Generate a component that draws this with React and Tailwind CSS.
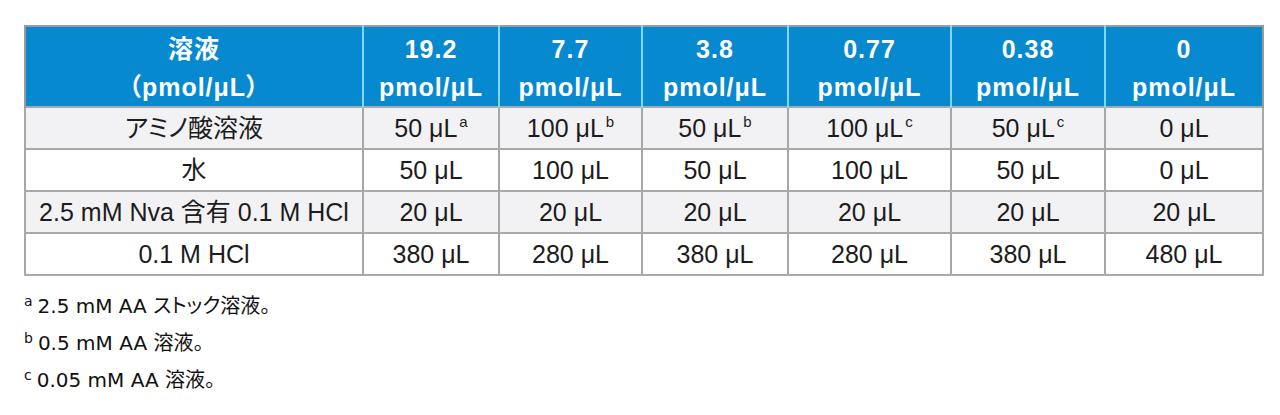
import React from "react";

const heads = [
  ["19.2", "pmol/μL"],
  ["7.7", "pmol/μL"],
  ["3.8", "pmol/μL"],
  ["0.77", "pmol/μL"],
  ["0.38", "pmol/μL"],
  ["0", "pmol/μL"],
];

const rows = [
  { label: "アミノ酸溶液", cells: [["50 μL", "a"], ["100 μL", "b"], ["50 μL", "b"], ["100 μL", "c"], ["50 μL", "c"], ["0 μL", ""]], bg: "bg-[#f2f2f4]" },
  { label: "水", cells: [["50 μL"], ["100 μL"], ["50 μL"], ["100 μL"], ["50 μL"], ["0 μL"]], bg: "bg-white" },
  { label: "2.5 mM Nva 含有 0.1 M HCl", cells: [["20 μL"], ["20 μL"], ["20 μL"], ["20 μL"], ["20 μL"], ["20 μL"]], bg: "bg-[#f2f2f4]" },
  { label: "0.1 M HCl", cells: [["380 μL"], ["280 μL"], ["380 μL"], ["280 μL"], ["380 μL"], ["480 μL"]], bg: "bg-white" },
];

const widths = [338, 136, 143, 146, 163, 154, 158];

const tableFont = '"Liberation Sans", "Noto Sans CJK JP", sans-serif';

export default function App() {
  return (
    <div className="w-[1280px] h-[415px] bg-white pt-[25px] pl-[24px]">
      <table
        className="border-collapse table-fixed text-[25px] text-[#1c1c1c] [font-feature-settings:'palt']"
        style={{ fontFamily: tableFont }}
      >
        <colgroup>
          {widths.map((w, i) => (
            <col key={i} style={{ width: w }} />
          ))}
        </colgroup>
        <thead>
          <tr className="bg-[#0789d0] text-white font-bold h-[80px] leading-[38px] text-[25px] tracking-[1px]">
            <th className="border-l-2 border-l-[#9a9a9a] border-r-2 border-r-[#7fd8f5] border-t-2 border-t-[#9a9a9a] p-0 pt-[3px] align-middle">
              溶液
              <br />
              （pmol/μL）
            </th>
            {heads.map((h, i) => (
              <th
                key={i}
                className={
                  "border-t-2 border-t-[#9a9a9a] p-0 pt-[3px] align-middle " +
                  (i === heads.length - 1
                    ? "border-r-2 border-r-[#9a9a9a]"
                    : "border-r-2 border-r-[#7fd8f5]")
                }
              >
                {h[0]}
                <br />
                {h[1]}
              </th>
            ))}
          </tr>
        </thead>
        <tbody>
          {rows.map((r, ri) => (
            <tr key={ri} className={r.bg + " h-[42px]"}>
              <td className="border-2 border-[#a8a8a8] text-center p-0 whitespace-nowrap leading-[38px]">{r.label}</td>
              {r.cells.map((c, ci) => (
                <td key={ci} className="border-2 border-[#a8a8a8] text-center p-0 whitespace-nowrap leading-[38px]">
                  {c[0]}
                  {c[1] ? <sup className="text-[15px] ml-[2px] relative top-[-10px]">{c[1]}</sup> : null}
                </td>
              ))}
            </tr>
          ))}
        </tbody>
      </table>
      <div
        className="mt-[17px] text-[20px] text-[#111] flex flex-col gap-[11px] leading-[26px] [font-feature-settings:'palt']"
        style={{ fontFamily: '"DejaVu Sans", "Noto Sans CJK JP", sans-serif' }}
      >
        <div>
          <sup className="text-[14px] mr-[5px]">a</sup>2.5 mM AA ストック溶液。
        </div>
        <div>
          <sup className="text-[14px] mr-[5px]">b</sup>0.5 mM AA 溶液。
        </div>
        <div>
          <sup className="text-[14px] mr-[5px]">c</sup>0.05 mM AA 溶液。
        </div>
      </div>
    </div>
  );
}
